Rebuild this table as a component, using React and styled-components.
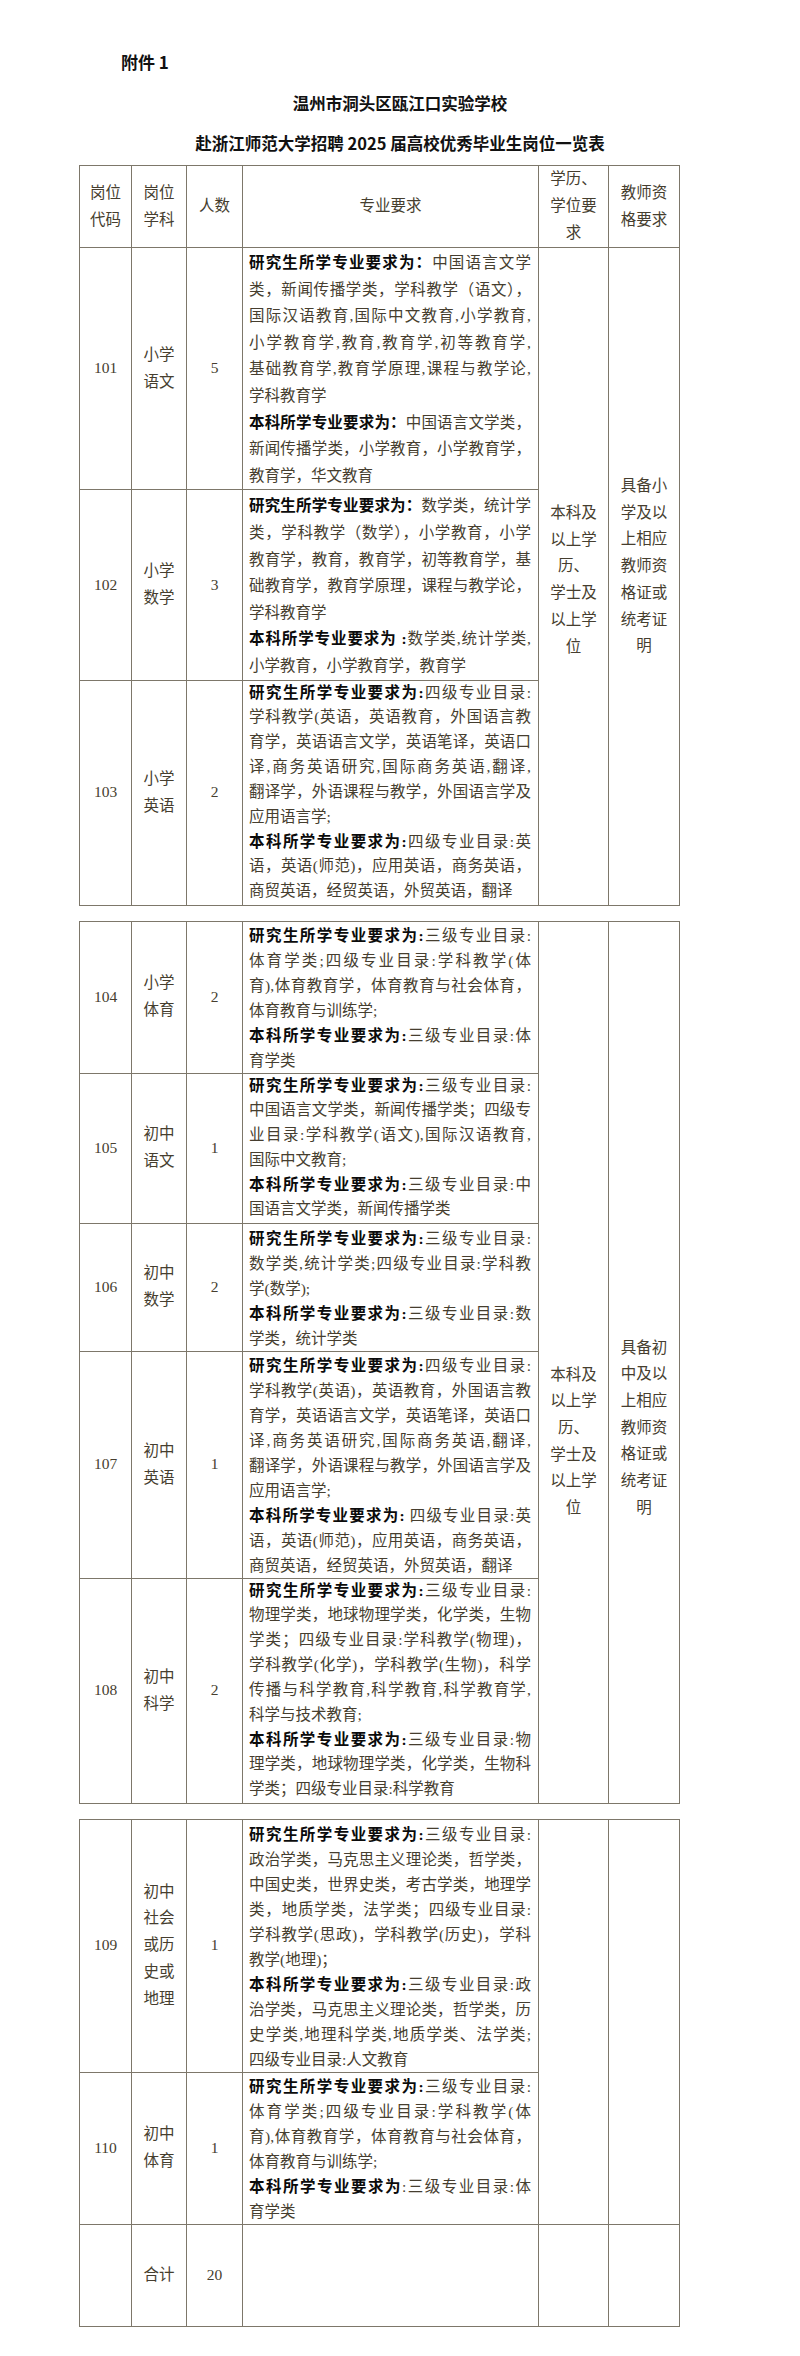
import React from 'react'
import styled, { createGlobalStyle } from 'styled-components'

const GlobalStyle = createGlobalStyle`
    html, body {
        margin: 0;
        padding: 0;
        background: #ffffff;
    }
`;

const Page = styled.div`
    width: 800px;
    min-height: 2356px;
    padding-top: 49px;
    box-sizing: border-box;
    font-family: "Liberation Serif", "Noto Sans CJK SC", serif;
`;

const Attachment = styled.div`
    margin-left: 121px;
    font-family: "Noto Sans CJK SC", sans-serif;
    font-weight: 700;
    font-size: 17px;
    line-height: 26px;
    color: #111;
`;

const Title = styled.h1`
    margin: ${props => props.$gap}px 0 0;
    text-align: center;
    font-family: "Noto Sans CJK SC", sans-serif;
    font-weight: 700;
    font-size: 16.5px;
    line-height: 26px;
    color: #111;
`;

const Sheet = styled.table`
    border-collapse: collapse;
    table-layout: fixed;
    width: 600px;
    margin: ${props => props.$gap}px 0 0 79px;
`;

const Col = styled.col`
    width: ${props => props.$w}px;
`;

const Row = styled.tr`
    height: ${props => props.$h}px;
`;

const Cell = styled.td`
    border: 1px solid #7d776a;
    padding: 0;
    text-align: center;
    vertical-align: middle;
    font-size: 15.5px;
    line-height: 26.7px;
    color: #463e2f;
`;

const ReqCell = styled(Cell)`
    text-align: left;
    vertical-align: top;
    padding: ${props => props.$pt}px 7px 0 6px;
    line-height: ${props => props.$lh}px;
`;

const MergedCell = styled(Cell)`
    vertical-align: top;
    padding-top: ${props => props.$top}px;
`;

const Line = styled.span`
    display: block;
    text-align: ${props => (props.$full ? 'justify' : 'left')};
    text-align-last: ${props => (props.$full ? 'justify' : 'left')};
`;

/* same family as the cell so the label doesn't stretch the line box */
const Label = styled.b`
    font-weight: 700;
    color: #0b0b0b;
`;

const Stack = ({ lines }) => lines.map((l, i) => <div key={i}>{l}</div>);

const degree = ['本科及', '以上学', '历、', '学士及', '以上学', '位'];

const segments = [
    {
        gap: 9,
        merged: { span: 3, degreeTop: 252, certTop: 225, cert: ['具备小', '学及以', '上相应', '教师资', '格证或', '统考证', '明'] },
        rows: [
            {
                code: '101', subj: ['小学', '语文'], n: '5', h: 242, lh: 26.6, pt: 2,
                paras: [
                    { label: '研究生所学专业要求为：', lines: ['中国语言文学', '类，新闻传播学类，学科教学（语文），', '国际汉语教育,国际中文教育,小学教育,', '小学教育学,教育,教育学,初等教育学,', '基础教育学,教育学原理,课程与教学论,', '学科教育学'] },
                    { label: '本科所学专业要求为：', lines: ['中国语言文学类，', '新闻传播学类，小学教育，小学教育学，', '教育学，华文教育'] },
                ],
            },
            {
                code: '102', subj: ['小学', '数学'], n: '3', h: 190, lh: 26.6, pt: 3,
                paras: [
                    { label: '研究生所学专业要求为：', lines: ['数学类，统计学', '类，学科教学（数学），小学教育，小学', '教育学，教育，教育学，初等教育学，基', '础教育学，教育学原理，课程与教学论，', '学科教育学'] },
                    { label: '本科所学专业要求为 :', lines: ['数学类,统计学类,', '小学教育，小学教育学，教育学'] },
                ],
            },
            {
                code: '103', subj: ['小学', '英语'], n: '2', h: 225, lh: 24.85, pt: 0,
                paras: [
                    { label: '研究生所学专业要求为:', lines: ['四级专业目录:', '学科教学(英语，英语教育，外国语言教', '育学，英语语言文学，英语笔译，英语口', '译,商务英语研究,国际商务英语,翻译,', '翻译学，外语课程与教学，外国语言学及', '应用语言学;'] },
                    { label: '本科所学专业要求为:', lines: ['四级专业目录:英', '语，英语(师范)，应用英语，商务英语，', '商贸英语，经贸英语，外贸英语，翻译'] },
                ],
            },
        ],
    },
    {
        gap: 15,
        merged: { span: 5, degreeTop: 440, certTop: 413, cert: ['具备初', '中及以', '上相应', '教师资', '格证或', '统考证', '明'] },
        rows: [
            {
                code: '104', subj: ['小学', '体育'], n: '2', h: 152, lh: 25, pt: 1,
                paras: [
                    { label: '研究生所学专业要求为:', lines: ['三级专业目录:', '体育学类;四级专业目录:学科教学(体', '育),体育教育学，体育教育与社会体育，', '体育教育与训练学;'] },
                    { label: '本科所学专业要求为:', lines: ['三级专业目录:体', '育学类'] },
                ],
            },
            {
                code: '105', subj: ['初中', '语文'], n: '1', h: 150, lh: 24.8, pt: 0,
                paras: [
                    { label: '研究生所学专业要求为:', lines: ['三级专业目录:', '中国语言文学类，新闻传播学类；四级专', '业目录:学科教学(语文),国际汉语教育,', '国际中文教育;'] },
                    { label: '本科所学专业要求为:', lines: ['三级专业目录:中', '国语言文学类，新闻传播学类'] },
                ],
            },
            {
                code: '106', subj: ['初中', '数学'], n: '2', h: 128, lh: 25, pt: 2,
                paras: [
                    { label: '研究生所学专业要求为:', lines: ['三级专业目录:', '数学类,统计学类;四级专业目录:学科教', '学(数学);'] },
                    { label: '本科所学专业要求为:', lines: ['三级专业目录:数', '学类，统计学类'] },
                ],
            },
            {
                code: '107', subj: ['初中', '英语'], n: '1', h: 227, lh: 25, pt: 1,
                paras: [
                    { label: '研究生所学专业要求为:', lines: ['四级专业目录:', '学科教学(英语)，英语教育，外国语言教', '育学，英语语言文学，英语笔译，英语口', '译,商务英语研究,国际商务英语,翻译,', '翻译学，外语课程与教学，外国语言学及', '应用语言学;'] },
                    { label: '本科所学专业要求为:', lines: [' 四级专业目录:英', '语，英语(师范)，应用英语，商务英语，', '商贸英语，经贸英语，外贸英语，翻译'] },
                ],
            },
            {
                code: '108', subj: ['初中', '科学'], n: '2', h: 225, lh: 24.85, pt: 0,
                paras: [
                    { label: '研究生所学专业要求为:', lines: ['三级专业目录:', '物理学类，地球物理学类，化学类，生物', '学类；四级专业目录:学科教学(物理)，', '学科教学(化学)，学科教学(生物)，科学', '传播与科学教育,科学教育,科学教育学,', '科学与技术教育;'] },
                    { label: '本科所学专业要求为:', lines: ['三级专业目录:物', '理学类，地球物理学类，化学类，生物科', '学类；四级专业目录:科学教育'] },
                ],
            },
        ],
    },
    {
        gap: 15,
        merged: { span: 2 },
        rows: [
            {
                code: '109', subj: ['初中', '社会', '或历', '史或', '地理'], n: '1', h: 253, lh: 25, pt: 2,
                paras: [
                    { label: '研究生所学专业要求为:', lines: ['三级专业目录:', '政治学类，马克思主义理论类，哲学类，', '中国史类，世界史类，考古学类，地理学', '类，地质学类，法学类；四级专业目录:', '学科教学(思政)，学科教学(历史)，学科', '教学(地理)；'] },
                    { label: '本科所学专业要求为:', lines: ['三级专业目录:政', '治学类，马克思主义理论类，哲学类，历', '史学类,地理科学类,地质学类、法学类;', '四级专业目录:人文教育'] },
                ],
            },
            {
                code: '110', subj: ['初中', '体育'], n: '1', h: 152, lh: 25, pt: 1,
                paras: [
                    { label: '研究生所学专业要求为:', lines: ['三级专业目录:', '体育学类;四级专业目录:学科教学(体', '育),体育教育学，体育教育与社会体育，', '体育教育与训练学;'] },
                    { label: '本科所学专业要求为', lines: [':三级专业目录:体', '育学类'] },
                ],
            },
        ],
        total: { label: '合计', n: '20', h: 102 },
    },
];

const Requirements = ({ row }) => (
    <ReqCell $lh={row.lh} $pt={row.pt}>
        {row.paras.map((p, pi) =>
            p.lines.map((text, i) => (
                <Line key={`${pi}-${i}`} $full={i < p.lines.length - 1}>
                    {i === 0 && <Label>{p.label}</Label>}
                    {text}
                </Line>
            ))
        )}
    </ReqCell>
);

const Columns = () => (
    <colgroup>
        {[52, 55, 56, 296, 70, 71].map((w, i) => <Col key={i} $w={w} />)}
    </colgroup>
);

const Segment = ({ seg, header }) => (
    <Sheet $gap={seg.gap}>
        <Columns />
        <tbody>
            {header && (
                <Row $h={82}>
                    <Cell><Stack lines={['岗位', '代码']} /></Cell>
                    <Cell><Stack lines={['岗位', '学科']} /></Cell>
                    <Cell>人数</Cell>
                    <Cell>专业要求</Cell>
                    <Cell><Stack lines={['学历、', '学位要', '求']} /></Cell>
                    <Cell><Stack lines={['教师资', '格要求']} /></Cell>
                </Row>
            )}
            {seg.rows.map((row, i) => (
                <Row key={row.code} $h={row.h}>
                    <Cell>{row.code}</Cell>
                    <Cell><Stack lines={row.subj} /></Cell>
                    <Cell>{row.n}</Cell>
                    <Requirements row={row} />
                    {i === 0 && (
                        <>
                            <MergedCell rowSpan={seg.merged.span} $top={seg.merged.degreeTop || 0}>
                                {seg.merged.cert && <Stack lines={degree} />}
                            </MergedCell>
                            <MergedCell rowSpan={seg.merged.span} $top={seg.merged.certTop || 0}>
                                {seg.merged.cert && <Stack lines={seg.merged.cert} />}
                            </MergedCell>
                        </>
                    )}
                </Row>
            ))}
            {seg.total && (
                <Row $h={seg.total.h}>
                    <Cell />
                    <Cell>{seg.total.label}</Cell>
                    <Cell>{seg.total.n}</Cell>
                    <Cell />
                    <Cell />
                    <Cell />
                </Row>
            )}
        </tbody>
    </Sheet>
);

const App = () => {
    return (
        <Page lang="zh-CN">
            <GlobalStyle />
            <Attachment>附件 1</Attachment>
            <Title $gap={15}>温州市洞头区瓯江口实验学校</Title>
            <Title $gap={14}>赴浙江师范大学招聘 2025 届高校优秀毕业生岗位一览表</Title>
            {segments.map((seg, i) => (
                <Segment key={i} seg={seg} header={i === 0} />
            ))}
        </Page>
    )
}

export default App
